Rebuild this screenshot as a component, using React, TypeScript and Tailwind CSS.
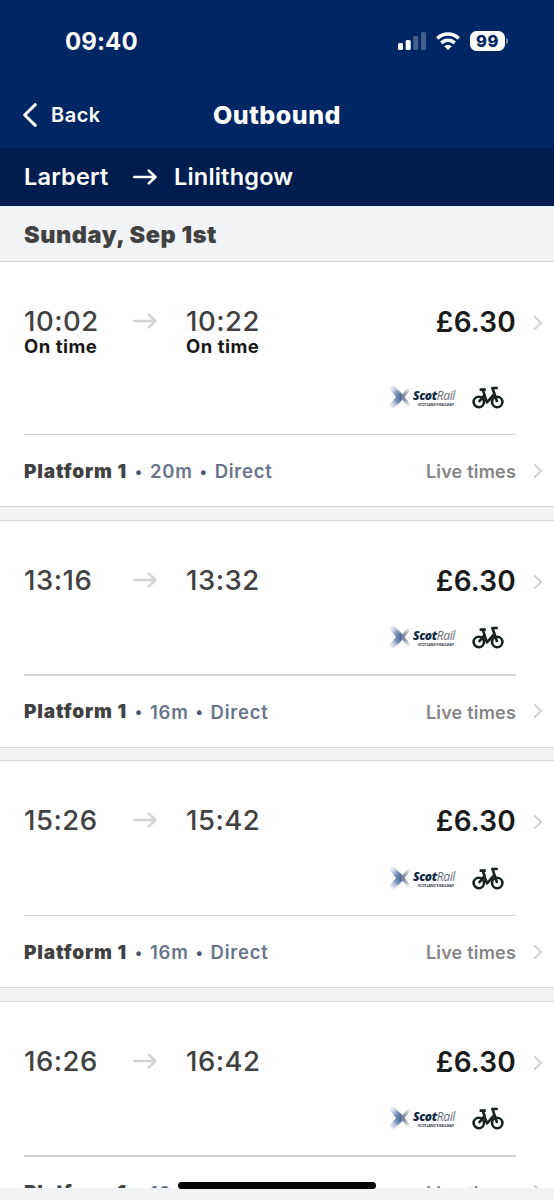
import { Fragment } from 'react';

interface Journey {
  depart: string;
  arrive: string;
  departStatus?: string;
  arriveStatus?: string;
  price: string;
  platform: string;
  duration: string;
}

const journeys: Journey[] = [
  { depart: '10:02', arrive: '10:22', departStatus: 'On time', arriveStatus: 'On time', price: '£6.30', platform: 'Platform 1', duration: '20m' },
  { depart: '13:16', arrive: '13:32', price: '£6.30', platform: 'Platform 1', duration: '16m' },
  { depart: '15:26', arrive: '15:42', price: '£6.30', platform: 'Platform 1', duration: '16m' },
  { depart: '16:26', arrive: '16:42', price: '£6.30', platform: 'Platform 1', duration: '16m' },
];

function Arrow({ className }: { className: string }) {
  return (
    <svg width="24" height="16" viewBox="0 0 24 16" fill="none" stroke="currentColor" strokeWidth="2.6" strokeLinecap="round" strokeLinejoin="round" className={className}>
      <path d="M1.3 8H22.2M15.8 1.6L22.4 8L15.8 14.4" />
    </svg>
  );
}

function Chevron() {
  return (
    <svg width="10" height="16" viewBox="0 0 10 16" fill="none" stroke="#cbcbcd" strokeWidth="1.8" className="shrink-0">
      <path d="M1.2 1.4L8.2 8L1.2 14.6" />
    </svg>
  );
}

function StatusIcons() {
  return (
    <div className="flex items-center">
      <svg width="28" height="18" viewBox="0 0 28 18" fill="white">
        <rect x="0" y="11" width="5" height="7" rx="1.5" />
        <rect x="7.7" y="8" width="5" height="10" rx="1.5" />
        <rect x="15.3" y="4" width="5" height="14" rx="1.5" opacity="0.27" />
        <rect x="23" y="0" width="5" height="18" rx="1.5" opacity="0.27" />
      </svg>
      <svg width="24" height="18" viewBox="0 0 24 18" className="ml-2.5" fill="none" stroke="white" strokeWidth="3.4">
        <path d="M1.3 6.5C7.2 .5 16.8 .5 22.7 6.5" />
        <path d="M5.3 11C9 7.3 15 7.3 18.7 11" />
        <path d="M12 18L8.2 14.3C10.3 12.4 13.7 12.4 15.8 14.3Z" fill="white" stroke="none" />
      </svg>
      <div className="ml-2.5 flex h-5 w-[35px] items-center justify-center rounded-[6.5px] bg-white text-[16.5px] font-extrabold tracking-[0.5px] text-[#002664]">
        99
      </div>
      <div className="ml-px h-1.5 w-0.5 rounded-r-full bg-white/45" />
    </div>
  );
}

function ScotRailLogo() {
  return (
    <div className="flex items-center">
      <svg width="27" height="26" viewBox="0 0 27 26">
        <defs>
          <radialGradient id="saltireBlue" gradientUnits="userSpaceOnUse" cx="15" cy="13" r="17">
            <stop offset="0" stopColor="#3d5e94" />
            <stop offset="0.4" stopColor="#8094ba" />
            <stop offset="1" stopColor="#c9d3e4" stopOpacity="0" />
          </radialGradient>
          <radialGradient id="saltireGrey" gradientUnits="userSpaceOnUse" cx="15" cy="13" r="13">
            <stop offset="0" stopColor="#6d7488" />
            <stop offset="0.5" stopColor="#b3b7c0" />
            <stop offset="1" stopColor="#dfe0e3" stopOpacity="0" />
          </radialGradient>
        </defs>
        <path d="M0 2H7L18 12.4V13.6L7 24H-1L9 13Z" fill="url(#saltireBlue)" />
        <path d="M27 2H22L14 12V14L22 24H27L17.5 13Z" fill="url(#saltireGrey)" />
      </svg>
      <div className="-ml-px flex w-[42px] flex-col pt-0.5 whitespace-nowrap">
        <p className="h-[13px] pt-px font-['Open_Sans',sans-serif] text-[12px] leading-3 tracking-[-0.4px] italic">
          <span className="font-extrabold text-[#102b46]">Scot</span>
          <span className="font-medium text-[#6a6d74]">Rail</span>
        </p>
        <p className="h-[5px] pl-[5px] font-['Open_Sans',sans-serif] text-[3.3px] leading-[5px] font-bold text-[#283040]">SCOTLAND’S RAILWAY</p>
      </div>
    </div>
  );
}

function Bike() {
  return (
    <svg width="32" height="24" viewBox="0 0 32 24" fill="none" stroke="#14211f" strokeWidth="2.6" strokeLinejoin="round">
      <circle cx="6.8" cy="17" r="5.2" />
      <circle cx="25.2" cy="17" r="5.2" />
      <path d="M6.8 17L12.4 10.2L15 17.4L22 9.4" />
      <path d="M7.6 4.6H13.8M10.6 4.6L12.8 10.4" />
      <path d="M25.2 17L20.4 3H25.8" />
    </svg>
  );
}

function TimeColumn({ time, status }: { time: string; status?: string }) {
  return (
    <div>
      <p className="text-[27.5px] leading-8 font-medium tracking-[0.5px] text-[#414141]">{time}</p>
      {status && <p className="-mt-px text-[18.5px] leading-5 font-bold tracking-[0.5px] text-[#181818]">{status}</p>}
    </div>
  );
}

function JourneyCard({ journey }: { journey: Journey }) {
  return (
    <div className={`flex shrink-0 flex-col border-y border-[#d4d5d8] bg-white ${journey.departStatus ? 'h-[246px]' : 'h-[228px]'}`}>
      <div className="flex min-h-0 flex-1 pr-[11px] pl-6">
        <div className="flex flex-1 pt-[43px]">
          <div className="w-[109px]">
            <TimeColumn time={journey.depart} status={journey.departStatus} />
          </div>
          <Arrow className="mt-2 mr-[29px] text-[#d3d3d3]" />
          <TimeColumn time={journey.arrive} status={journey.arriveStatus} />
        </div>
        <div className="flex flex-col items-end justify-between pt-11 pb-6">
          <div className="flex items-center">
            <p className="text-[28px] leading-8 font-semibold tracking-[0.2px] text-[#1b1b1b]">{journey.price}</p>
            <div className="ml-[17px] pt-0.5"><Chevron /></div>
          </div>
          <div className="mr-[39px] flex items-center gap-[17px]">
            <ScotRailLogo />
            <Bike />
          </div>
        </div>
      </div>
      <div className="mr-[38px] ml-6 h-[1.5px] shrink-0 bg-[#d2d2d2]" />
      <div className="flex h-[71px] shrink-0 items-center pr-[11px] pl-6 text-[18.5px]">
        <p className="flex flex-1 items-center pt-[3px] font-semibold tracking-[0.75px] text-[#69748a]">
          <span className="w-[104px] text-[19px] font-black whitespace-nowrap tracking-[0.85px] text-[#414141]">{journey.platform}</span>
          {[journey.duration, 'Direct'].map(part => (
            <Fragment key={part}>
              <span className="w-[22px] text-center text-[15px] text-[#4d586f]">•</span>
              <span>{part}</span>
            </Fragment>
          ))}
        </p>
        <p className="mr-[17px] pt-0.5 text-[18px] font-semibold tracking-[0.2px] text-[#858585]">Live times</p>
        <Chevron />
      </div>
    </div>
  );
}

export default function App() {
  return (
    <div className="relative flex h-[1200px] w-[554px] flex-col overflow-hidden bg-[#f2f3f5] font-[Inter,sans-serif]">
      {/* Header */}
      <header className="h-[148px] shrink-0 bg-[#002664] text-white">
        <div className="flex h-[82px] items-center justify-between pr-[46px] pl-[65px]">
          <span className="pt-0.5 text-[24px] font-bold tracking-[0.1px]">09:40</span>
          <StatusIcons />
        </div>
        <div className="grid h-[66px] grid-cols-3 items-center pl-6">
          <button className="-ml-px flex items-center gap-3.5 text-[20px] font-semibold tracking-[0.5px]">
            <svg width="14" height="24" viewBox="0 0 14 24" fill="none" stroke="currentColor" strokeWidth="3" strokeLinecap="round" strokeLinejoin="round">
              <path d="M12.3 1.7L1.7 12L12.3 22.3" />
            </svg>
            Back
          </button>
          <h1 className="-ml-6 pt-0.5 text-center text-[25px] font-extrabold tracking-[0.5px]">Outbound</h1>
        </div>
      </header>
      <div className="flex h-[58px] shrink-0 items-center bg-[#001d4f] pl-6 text-[23.5px] font-semibold tracking-[0.2px] text-white">
        <span className="w-[109px]">Larbert</span>
        <Arrow className="mr-[17px]" />
        <span>Linlithgow</span>
      </div>

      {/* Journeys */}
      <h2 className="h-[55px] shrink-0 pl-6 text-[23.5px] leading-[58px] font-black tracking-[0.55px] text-[#414141]">Sunday, Sep 1st</h2>
      <main className="flex h-[927px] shrink-0 flex-col gap-[12.5px] overflow-hidden">
        {journeys.map(journey => (
          <JourneyCard key={journey.depart} journey={journey} />
        ))}
      </main>

      {/* Home indicator */}
      <div className="absolute bottom-[11px] left-[178px] h-[7px] w-[198px] rounded-full bg-black" />
    </div>
  );
}
